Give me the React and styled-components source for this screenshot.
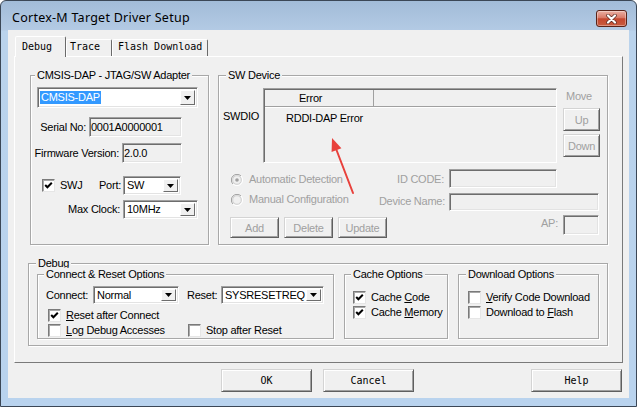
import React from 'react';
import styled, { createGlobalStyle } from 'styled-components';

const UI_FONT = `"Liberation Sans", Arial, sans-serif`;
const MONO = `"DejaVu Sans Mono", "Liberation Mono", monospace`;

const GlobalStyle = createGlobalStyle`
  html, body { margin: 0; padding: 0; }
  body { background: #ffffff; font-family: ${UI_FONT}; font-size: 11px; color: #000; }
  * { box-sizing: border-box; }
`;

const Window = styled.div`
  position: relative;
  width: 637px;
  height: 407px;
  border: 1px solid #3b4756;
  border-radius: 6px 6px 0 0;
  background: linear-gradient(180deg, #a2bcd8 0px, #b3cae4 29px, #bad3ec 30px, #b9d3ee 100%);
  display: flex;
  flex-direction: column;
  overflow: hidden;
`;

const TitleBar = styled.div`
  flex: none;
  height: 29px;
  display: flex;
  align-items: flex-start;
  padding-left: 11px;
`;

const TitleText = styled.div`
  margin-top: 9px;
  font-family: "Noto Sans", "Open Sans", sans-serif;
  font-size: 12.5px;
  letter-spacing: 0.25px;
  line-height: 16px;
  color: #000;
`;

const CloseButton = styled.div`
  width: 31px;
  height: 17px;
  margin: 9px 9px 0 auto;
  border: 1px solid #5a2318;
  border-radius: 3px;
  background: linear-gradient(180deg, #eab0a4 0%, #d97a68 45%, #c4472f 52%, #c95c40 100%);
  box-shadow: inset 0 0 0 1px rgba(255, 255, 255, 0.35);
  display: flex;
  align-items: center;
  justify-content: center;
`;

const Client = styled.div`
  flex: 1;
  margin: 0 7px 8px 7px;
  background: #f0f0f0;
  display: flex;
  flex-direction: column;
  font-family: ${UI_FONT};
  font-size: 11px;
  letter-spacing: -0.25px;
`;

const TabStrip = styled.div`
  flex: none;
  height: 26px;
  display: flex;
  align-items: flex-end;
  padding-left: 7px;
  position: relative;
  z-index: 1;
`;

const Tab = styled.div`
  flex: none;
  width: ${(p) => p.$w}px;
  height: ${(p) => (p.$active ? 21 : 17)}px;
  margin-bottom: ${(p) => (p.$active ? -1 : 0)}px;
  padding: ${(p) => (p.$active ? 4 : 1)}px 0 0 ${(p) => p.$pl}px;
  background: #f0f0f0;
  border: 1px solid;
  border-bottom: none;
  border-color: #ffffff #6a6a6a transparent #ffffff;
  border-radius: 2px 2px 0 0;
  font-family: ${MONO};
  font-size: 10px;
  line-height: 12px;
  letter-spacing: 0;
  white-space: nowrap;
`;

const Panel = styled.div`
  flex: none;
  margin-left: 6px;
  width: 609px;
  height: 307px;
  border: 1px solid;
  border-color: #ffffff #7a7a7a #7a7a7a #ffffff;
  padding: 12px 0 0 13px;
`;

const TopRow = styled.div`
  display: flex;
  gap: 9px;
  margin-left: 2px;
`;

const Group = styled.fieldset`
  flex: none;
  margin: ${(p) => p.$mt || 0}px 0 0 0;
  padding: 0;
  min-width: 0;
  width: ${(p) => p.$w}px;
  height: ${(p) => p.$h}px;
  border: 1px solid #a8a8a8;
  box-shadow: inset 1px 1px #ffffff, 1px 1px #ffffff;
`;

const Legend = styled.legend`
  margin-left: ${(p) => p.$ml}px;
  padding: 0 2px;
  line-height: 13px;
  font-size: 11px;
  background: #f0f0f0;
  white-space: nowrap;
`;

const Row = styled.div`
  display: flex;
  align-items: ${(p) => p.$align || 'center'};
  justify-content: ${(p) => (p.$end ? 'flex-end' : 'flex-start')};
  height: ${(p) => (p.$h ? `${p.$h}px` : 'auto')};
  margin-top: ${(p) => p.$mt || 0}px;
  padding-left: ${(p) => p.$pl || 0}px;
  padding-right: ${(p) => p.$pr || 0}px;
  gap: ${(p) => p.$gap || 0}px;
`;

const Push = styled.div`
  margin-left: auto;
  display: flex;
  align-items: ${(p) => p.$align || 'center'};
  gap: ${(p) => p.$gap || 0}px;
`;

const Label = styled.span`
  display: block;
  flex: none;
  line-height: 13px;
  white-space: nowrap;
  color: ${(p) => (p.$disabled ? '#a0a0a0' : '#000')};
  width: ${(p) => (p.$w ? `${p.$w}px` : 'auto')};
  margin-top: ${(p) => p.$mt || 0}px;
  margin-left: ${(p) => p.$ml || 0}px;
`;

const U = styled.span`
  text-decoration: underline;
  text-underline-offset: 1px;
`;

const Field = styled.div`
  flex: none;
  width: ${(p) => p.$w}px;
  height: ${(p) => p.$h || 20}px;
  border: 1px solid;
  border-color: #a0a0a0 #ffffff #ffffff #a0a0a0;
  box-shadow: inset 1px 1px #6d6d6d, inset -1px -1px #e3e3e3;
  background: ${(p) => (p.$white ? '#ffffff' : '#f0f0f0')};
  padding-left: 1px;
  display: flex;
  align-items: center;
  line-height: 13px;
  white-space: nowrap;
  overflow: hidden;
`;

const ComboBox = styled(Field)`
  padding-left: 0;
  background: #ffffff;
`;

const ComboValue = styled.div`
  flex: 1;
  padding-left: 2px;
  display: flex;
  align-items: center;
  min-width: 0;
`;

const Highlight = styled.span`
  background: ${(p) => (p.$on ? '#3399ff' : 'transparent')};
  color: ${(p) => (p.$on ? '#ffffff' : '#000')};
  padding: 0 1px;
  line-height: 13px;
`;

const ComboButton = styled.div`
  flex: none;
  width: 15px;
  align-self: stretch;
  margin: 2px 2px 2px 0;
  background: #f0f0f0;
  border: 1px solid;
  border-color: #ffffff #6d6d6d #6d6d6d #ffffff;
  display: flex;
  align-items: center;
  justify-content: center;
`;

const ListBox = styled.div`
  flex: none;
  width: 294px;
  height: 75px;
  border: 1px solid;
  border-color: #a0a0a0 #ffffff #ffffff #a0a0a0;
  box-shadow: inset 1px 1px #6d6d6d;
  background: #f0f0f0;
  padding: 1px 0 0 1px;
`;

const ListHeader = styled.div`
  display: flex;
  height: 17px;
  border-bottom: 1px solid #a0a0a0;
  box-shadow: 0 1px #ffffff;
`;

const HeaderCell = styled.div`
  flex: ${(p) => (p.$w ? 'none' : 1)};
  width: ${(p) => (p.$w ? `${p.$w}px` : 'auto')};
  border-right: ${(p) => (p.$w ? '1px solid #a0a0a0' : 'none')};
  padding-left: ${(p) => p.$pl || 0}px;
  line-height: 16px;
`;

const ListItem = styled.div`
  margin-top: 4px;
  padding-left: 21px;
  line-height: 14px;
`;

const MoveColumn = styled.div`
  flex: none;
  width: 37px;
  margin-left: 6px;
  display: flex;
  flex-direction: column;
`;

const Button = styled.div`
  flex: none;
  width: ${(p) => p.$w}px;
  height: ${(p) => p.$h}px;
  margin-top: ${(p) => p.$mt || 0}px;
  border: 1px solid;
  border-color: #d4d4d4 #5f5f5f #5f5f5f #d4d4d4;
  box-shadow: inset 1px 1px #ffffff, inset -1px -1px #a0a0a0;
  background: #f0f0f0;
  color: ${(p) => (p.$disabled ? '#a0a0a0' : '#000')};
  display: flex;
  align-items: center;
  justify-content: center;
  font-family: ${(p) => (p.$mono ? MONO : UI_FONT)};
  font-size: ${(p) => (p.$mono ? 10 : 11)}px;
  letter-spacing: ${(p) => (p.$mono ? 0 : -0.25)}px;
  white-space: nowrap;
`;

const ItemGroup = styled.div`
  flex: none;
  display: flex;
  align-items: center;
  width: ${(p) => (p.$w ? `${p.$w}px` : 'auto')};
  margin-top: ${(p) => p.$mt || 0}px;
  margin-left: ${(p) => p.$ml || 0}px;
  gap: ${(p) => p.$gap || 5}px;
  height: 13px;
`;

const Box = styled.span`
  flex: none;
  width: 13px;
  height: 13px;
  background: #ffffff;
  border: 1px solid;
  border-color: #7a7a7a #e6e6e6 #e6e6e6 #7a7a7a;
  box-shadow: inset 1px 1px #a8a8a8;
  display: flex;
  align-items: center;
  justify-content: center;
`;

const SubRow = styled.div`
  display: flex;
  gap: 10px;
  margin-top: -2px;
  padding-left: 8px;
`;

const ButtonBar = styled.div`
  flex: none;
  display: flex;
  gap: 11px;
  margin-top: 6px;
  padding: 0 7px 0 213px;
`;

const Spacer = styled.div`
  flex: 1;
`;

const ArrowMark = styled.svg`
  position: absolute;
  left: 323px;
  top: 131px;
  pointer-events: none;
`;

function Triangle() {
  return (
    <svg width="7" height="4" viewBox="0 0 7 4">
      <path d="M0 0 H7 L3.5 4 Z" fill="#000" />
    </svg>
  );
}

function Combo({ w, h, value, selected }) {
  return (
    <ComboBox $w={w} $h={h}>
      <ComboValue>
        <Highlight $on={selected}>{value}</Highlight>
      </ComboValue>
      <ComboButton>
        <Triangle />
      </ComboButton>
    </ComboBox>
  );
}

function CheckBox({ checked, children, w, ml }) {
  return (
    <ItemGroup $w={w} $ml={ml}>
      <Box>
        {checked && (
          <svg width="9" height="9" viewBox="0 0 9 9">
            <path d="M1.2 4 L3.4 6.3 L7.8 1.8" fill="none" stroke="#000" strokeWidth="2" />
          </svg>
        )}
      </Box>
      <Label>{children}</Label>
    </ItemGroup>
  );
}

function Radio({ checked, children, mt }) {
  return (
    <ItemGroup $mt={mt} $gap={6} $ml={12}>
      <svg width="12" height="12" viewBox="0 0 12 12">
        <path d="M10 2 A5.5 5.5 0 0 0 2 10" fill="none" stroke="#a0a0a0" />
        <path d="M2 10 A5.5 5.5 0 0 0 10 2" fill="none" stroke="#ffffff" />
        <circle cx="6" cy="6" r="4.3" fill="#f0f0f0" stroke="#c8c8c8" strokeWidth="0.8" />
        {checked && <circle cx="6" cy="6" r="1.8" fill="#a0a0a0" />}
      </svg>
      <Label $disabled>{children}</Label>
    </ItemGroup>
  );
}

export default function App() {
  return (
    <>
      <GlobalStyle />
      <Window>
        <TitleBar>
          <TitleText>Cortex-M Target Driver Setup</TitleText>
          <CloseButton>
            <svg width="13" height="10" viewBox="0 0 13 10">
              <path d="M3 1.5 L10 8.5 M10 1.5 L3 8.5" stroke="#5a2a22" strokeWidth="3.6" strokeLinecap="round" />
              <path d="M3 1.5 L10 8.5 M10 1.5 L3 8.5" stroke="#ffffff" strokeWidth="2.2" strokeLinecap="round" />
            </svg>
          </CloseButton>
        </TitleBar>

        <Client>
          <TabStrip>
            <Tab $active $w={51} $pl={6}>Debug</Tab>
            <Tab $w={46} $pl={3}>Trace</Tab>
            <Tab $w={96} $pl={5}>Flash Download</Tab>
          </TabStrip>

          <Panel>
            <TopRow>
              <Group $w={179} $h={176}>
                <Legend $ml={4}>CMSIS-DAP - JTAG/SW Adapter</Legend>
                <Row $mt={5} $pl={6}>
                  <Combo w={161} h={21} value="CMSIS-DAP" selected />
                </Row>
                <Row $mt={9} $end $pr={26} $gap={3}>
                  <Label>Serial No:</Label>
                  <Field $w={93}>0001A0000001</Field>
                </Row>
                <Row $mt={6} $end $pr={26} $gap={3}>
                  <Label>Firmware Version:</Label>
                  <Field $w={60}>2.0.0</Field>
                </Row>
                <Row $mt={13} $pl={11} $pr={27}>
                  <CheckBox checked>SWJ</CheckBox>
                  <Push $gap={2}>
                    <Label>Port:</Label>
                    <Combo w={58} h={19} value="SW" />
                  </Push>
                </Row>
                <Row $mt={5} $end $pr={10} $gap={3}>
                  <Label>Max Clock:</Label>
                  <Combo w={75} h={19} value="10MHz" />
                </Row>
              </Group>

              <Group $w={390} $h={176}>
                <Legend $ml={7}>SW Device</Legend>
                <Row $mt={6} $pl={4} $align="flex-start">
                  <Label $w={40} $mt={22}>SWDIO</Label>
                  <ListBox>
                    <ListHeader>
                      <HeaderCell $w={109} $pl={34}>Error</HeaderCell>
                      <HeaderCell />
                    </ListHeader>
                    <ListItem>RDDI-DAP Error</ListItem>
                  </ListBox>
                  <MoveColumn>
                    <Label $disabled $mt={2} $ml={3}>Move</Label>
                    <Button $disabled $w={37} $h={23} $mt={5}>Up</Button>
                    <Button $disabled $w={37} $h={23} $mt={3}>Down</Button>
                  </MoveColumn>
                </Row>
                <Row $mt={6} $h={19} $align="flex-start" $pr={50}>
                  <Radio checked mt={4}>Automatic Detection</Radio>
                  <Push $align="flex-start" $gap={5}>
                    <Label $disabled $mt={4}>ID CODE:</Label>
                    <Field $w={108} $h={19} />
                  </Push>
                </Row>
                <Row $mt={5} $h={19} $align="flex-start" $pr={8}>
                  <Radio mt={0}>Manual Configuration</Radio>
                  <Push $align="flex-start" $gap={4}>
                    <Label $disabled $mt={2}>Device Name:</Label>
                    <Field $w={150} $h={18} />
                  </Push>
                </Row>
                <Row $mt={3} $align="flex-start" $pl={11} $pr={8} $gap={5}>
                  <Button $disabled $w={49} $h={21} $mt={2}>Add</Button>
                  <Button $disabled $w={49} $h={21} $mt={2}>Delete</Button>
                  <Button $disabled $w={49} $h={21} $mt={2}>Update</Button>
                  <Push $align="flex-start" $gap={5}>
                    <Label $disabled $mt={2}>AP:</Label>
                    <Field $w={36} $h={20} />
                  </Push>
                </Row>
              </Group>
            </TopRow>

            <Group $w={580} $h={89} $mt={12}>
              <Legend $ml={7}>Debug</Legend>
              <SubRow>
                <Group $w={297} $h={71}>
                  <Legend $ml={6}>Connect &amp; Reset Options</Legend>
                  <Row $mt={5} $pl={8} $h={18}>
                    <Label $w={47}>Connect:</Label>
                    <Combo w={86} h={18} value="Normal" />
                    <Label $w={34} $ml={8}>Reset:</Label>
                    <Combo w={103} h={18} value="SYSRESETREQ" />
                  </Row>
                  <Row $mt={4} $pl={10} $h={15}>
                    <CheckBox checked><U>R</U>eset after Connect</CheckBox>
                  </Row>
                  <Row $pl={10} $h={15}>
                    <CheckBox w={140}><U>L</U>og Debug Accesses</CheckBox>
                    <CheckBox>Stop after Reset</CheckBox>
                  </Row>
                </Group>

                <Group $w={104} $h={71}>
                  <Legend $ml={6}>Cache Options</Legend>
                  <Row $mt={9} $pl={8} $h={15}>
                    <CheckBox checked>Cache <U>C</U>ode</CheckBox>
                  </Row>
                  <Row $pl={8} $h={15}>
                    <CheckBox checked>Cache <U>M</U>emory</CheckBox>
                  </Row>
                </Group>

                <Group $w={141} $h={71}>
                  <Legend $ml={7}>Download Options</Legend>
                  <Row $mt={9} $pl={9} $h={15}>
                    <CheckBox><U>V</U>erify Code Download</CheckBox>
                  </Row>
                  <Row $pl={9} $h={15}>
                    <CheckBox>Download to <U>F</U>lash</CheckBox>
                  </Row>
                </Group>
              </SubRow>
            </Group>
          </Panel>

          <ButtonBar>
            <Button $mono $w={91} $h={23}>OK</Button>
            <Button $mono $w={91} $h={23}>Cancel</Button>
            <Spacer />
            <Button $mono $w={91} $h={23}>Help</Button>
          </ButtonBar>
        </Client>

        <ArrowMark width="36" height="64" viewBox="0 0 36 64">
          <path d="M29 61 L12.5 18" stroke="#e8413c" strokeWidth="2" strokeLinecap="round" />
          <path d="M8 6 L17.4 16.3 L7.6 19.9 Z" fill="#e8413c" />
        </ArrowMark>
      </Window>
    </>
  );
}
